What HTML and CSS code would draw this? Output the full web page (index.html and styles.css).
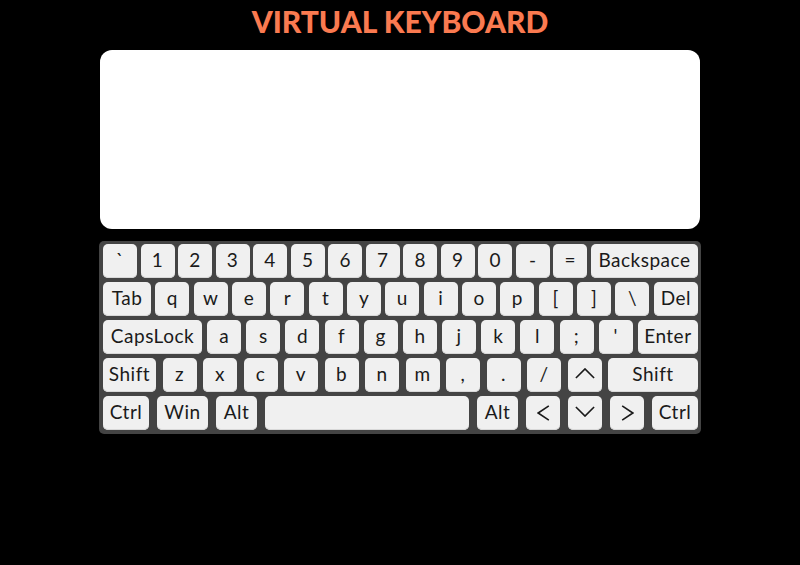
FILE: index.html
```html
<!DOCTYPE html>
<html lang="en">
<head>
<meta charset="utf-8">
<title>Virtual Keyboard</title>
<link rel="stylesheet" href="styles.css">
</head>
<body>
<main class="app">
  <h1 class="title">VIRTUAL KEYBOARD</h1>
  <textarea class="output"></textarea>
  <div class="keyboard">
    <div class="row">
      <div class="key">`</div><div class="key">1</div><div class="key">2</div><div class="key">3</div><div class="key">4</div><div class="key">5</div><div class="key">6</div><div class="key">7</div><div class="key">8</div><div class="key">9</div><div class="key">0</div><div class="key">-</div><div class="key">=</div><div class="key k-backspace">Backspace</div>
    </div>
    <div class="row">
      <div class="key k-tab">Tab</div><div class="key">q</div><div class="key">w</div><div class="key">e</div><div class="key">r</div><div class="key">t</div><div class="key">y</div><div class="key">u</div><div class="key">i</div><div class="key">o</div><div class="key">p</div><div class="key">[</div><div class="key">]</div><div class="key">\</div><div class="key k-del">Del</div>
    </div>
    <div class="row">
      <div class="key k-caps">CapsLock</div><div class="key">a</div><div class="key">s</div><div class="key">d</div><div class="key">f</div><div class="key">g</div><div class="key">h</div><div class="key">j</div><div class="key">k</div><div class="key">l</div><div class="key">;</div><div class="key">'</div><div class="key k-enter">Enter</div>
    </div>
    <div class="row">
      <div class="key k-shift">Shift</div><div class="key">z</div><div class="key">x</div><div class="key">c</div><div class="key">v</div><div class="key">b</div><div class="key">n</div><div class="key">m</div><div class="key">,</div><div class="key">.</div><div class="key">/</div>
      <div class="key"><svg class="arrow" viewBox="0 0 22 12"><path d="M1 11 L11 1 L21 11"/></svg></div>
      <div class="key k-shift-r">Shift</div>
    </div>
    <div class="row">
      <div class="key k-ctrl">Ctrl</div><div class="key k-win">Win</div><div class="key k-alt">Alt</div><div class="key k-space"></div><div class="key k-alt">Alt</div>
      <div class="key"><svg class="arrow-v" viewBox="0 0 14 18"><path d="M13 1 L1 9 L13 17"/></svg></div>
      <div class="key"><svg class="arrow" viewBox="0 0 22 12"><path d="M1 1 L11 11 L21 1"/></svg></div>
      <div class="key"><svg class="arrow-v" viewBox="0 0 14 18"><path d="M1 1 L13 9 L1 17"/></svg></div>
      <div class="key k-ctrl">Ctrl</div>
    </div>
  </div>
</main>
</body>
</html>
```

FILE: styles.css
```css
* { box-sizing: border-box; }

html, body {
  margin: 0;
  padding: 0;
  background: #000;
}

body {
  font-family: "Lato", "Open Sans", sans-serif;
}

.app {
  width: 602px;
  margin: 0 auto;
  display: flex;
  flex-direction: column;
  align-items: center;
}

.title {
  margin: 4px 0 0;
  height: 46px;
  font-size: 30px;
  font-weight: 900;
  color: #fa7a50;
  letter-spacing: 0;
  line-height: 34px;
}

.output {
  width: 600px;
  height: 179px;
  border: none;
  border-radius: 12px;
  background: #fff;
  resize: none;
  outline: none;
  display: block;
}

.keyboard {
  margin-top: 12px;
  width: 602px;
  background: #444;
  border-radius: 5px;
  padding: 3px 3px 4px 4px;
  display: flex;
  flex-direction: column;
  gap: 4px;
}

.row {
  display: flex;
  justify-content: space-between;
  height: 34px;
}

.key {
  width: 34px;
  height: 34px;
  flex: none;
  background: #f0f0f0;
  border-radius: 5px;
  box-shadow: inset 0 -1px 0 #d8d8d8;
  color: #1a1a1a;
  font-size: 19px;
  letter-spacing: 0.5px;
  line-height: 1;
  padding-bottom: 4px;
  display: flex;
  align-items: center;
  justify-content: center;
}

.k-backspace { width: 107px; }
.k-tab { width: 48px; }
.k-del { width: 44px; }
.k-caps { width: 99px; }
.k-enter { width: 60px; }
.k-shift { width: 53px; }
.k-shift-r { width: 90px; }
.k-ctrl { width: 46px; }
.k-win { width: 51px; }
.k-alt { width: 41px; }
.k-space { width: 204px; }

.arrow {
  width: 20px;
  height: 11px;
  fill: none;
  stroke: #1a1a1a;
  stroke-width: 1.8;
}

.arrow-v {
  width: 13px;
  height: 16px;
  margin-top: 4px;
  fill: none;
  stroke: #1a1a1a;
  stroke-width: 1.8;
}
```
